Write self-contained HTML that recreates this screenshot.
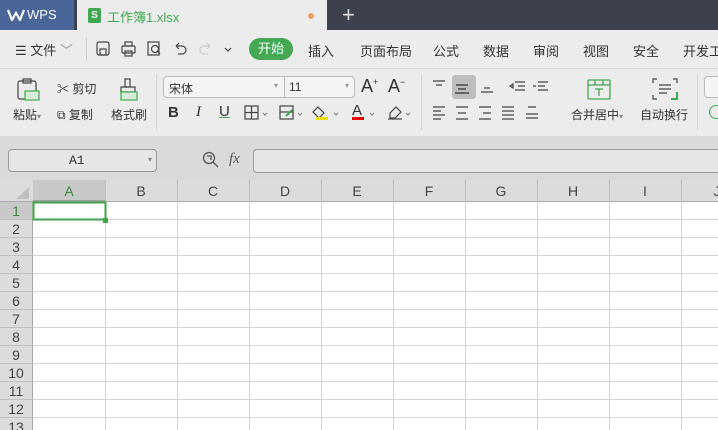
<!DOCTYPE html><html><head><meta charset="utf-8"><style>
*{margin:0;padding:0;box-sizing:border-box}
body{width:718px;height:430px;overflow:hidden;background:#fff;font-family:"Liberation Sans","Noto Sans CJK SC",sans-serif;font-size:12px;color:#333;position:relative}
.a{position:absolute}
.t{position:absolute;white-space:nowrap}
</style></head><body>
<div class="a" style="left:0;top:0;width:718px;height:30px;background:#3d414d"></div>
<div class="a" style="left:0;top:0;width:74px;height:30px;background:#4a6698"></div>
<svg class="a" style="left:7px;top:9px" width="18" height="12"><path d="M1 1 L5 11 L9 4 L13 11 L17 1" stroke="#fff" stroke-width="2.2" fill="none"/></svg>
<div class="t" style="left:27px;top:7px;color:#fff;font-size:13px">WPS</div>
<div class="a" style="left:77px;top:0;width:250px;height:30px;background:#ececec"></div>
<div class="a" style="left:88px;top:8px;width:13px;height:15px;background:#3fa950;border-radius:2px;color:#fff;font-size:10px;text-align:center;line-height:15px;font-weight:bold">S</div>
<div class="t" style="left:107px;top:7px;color:#3fa950;font-size:13px">工作簿1.xlsx</div>
<div class="a" style="left:308px;top:13px;width:6px;height:6px;border-radius:3px;background:#e8a060"></div>
<div class="t" style="left:342px;top:2px;color:#ddd;font-size:22px">+</div>
<div class="a" style="left:0;top:30px;width:718px;height:106px;background:#ececec"></div>
<div class="a" style="left:0;top:68px;width:718px;height:1px;background:#d6d6d6"></div>
<div class="t" style="left:15px;top:40px;font-size:13px">☰ 文件 <span style="color:#999">﹀</span></div>
<div class="a" style="left:86px;top:38px;width:1px;height:22px;background:#ccc"></div>
<svg class="a" style="left:96px;top:41px" width="140" height="16" fill="none" stroke="#444" stroke-width="1.2">
<rect x="1" y="1" width="12" height="13" rx="2"/><rect x="4" y="8" width="6" height="6"/>
<rect x="26" y="5" width="13" height="7" rx="1"/><rect x="29" y="1" width="7" height="4"/><rect x="29" y="10" width="7" height="5"/>
<rect x="52" y="1" width="11" height="13"/><circle cx="59" cy="8" r="3.5"/><path d="M61 10l3 3"/>
<path d="M80 5h6a4 4 0 010 8h-4M80 5l3-3M80 5l3 3"/>
<path d="M114 5h-6a4 4 0 000 8h4M114 5l-3-3M114 5l-3 3" stroke="#ccc"/>
<path d="M129 7l3 3 3-3"/></svg>
<div class="a" style="left:249px;top:38px;width:44px;height:22px;border-radius:11px;background:#44a952;color:#fff;font-size:13px;text-align:center;line-height:22px">开始</div>
<div class="t" style="left:308px;top:41px;font-size:13px">插入</div>
<div class="t" style="left:360px;top:41px;font-size:13px">页面布局</div>
<div class="t" style="left:433px;top:41px;font-size:13px">公式</div>
<div class="t" style="left:483px;top:41px;font-size:13px">数据</div>
<div class="t" style="left:533px;top:41px;font-size:13px">审阅</div>
<div class="t" style="left:583px;top:41px;font-size:13px">视图</div>
<div class="t" style="left:633px;top:41px;font-size:13px">安全</div>
<div class="t" style="left:683px;top:41px;font-size:13px">开发工</div>
<svg class="a" style="left:16px;top:78px" width="26" height="24" fill="none" stroke="#444" stroke-width="1.2"><rect x="2" y="3" width="18" height="18" rx="2"/><rect x="7" y="1" width="8" height="4"/><rect x="9" y="13" width="14" height="9" fill="#d9ead9" stroke="#3fa950"/></svg>
<div class="t" style="left:13px;top:106px">粘贴<span style="color:#888;font-size:8px">▾</span></div>
<div class="t" style="left:57px;top:80px">✂ 剪切</div>
<div class="t" style="left:57px;top:106px">⧉ 复制</div>
<svg class="a" style="left:118px;top:78px" width="22" height="24" fill="none" stroke="#444" stroke-width="1.2"><rect x="7" y="1" width="5" height="8"/><path d="M3 9h14v5H3z"/><rect x="3" y="14" width="16" height="8" fill="#d9ead9" stroke="#3fa950"/></svg>
<div class="t" style="left:111px;top:106px">格式刷</div>
<div class="a" style="left:156px;top:74px;width:1px;height:56px;background:#d6d6d6"></div>
<div class="a" style="left:163px;top:76px;width:192px;height:22px;border:1px solid #bbb;border-radius:4px;background:#f4f4f4"></div>
<div class="a" style="left:284px;top:77px;width:1px;height:20px;background:#bbb"></div>
<div class="t" style="left:169px;top:80px">宋体</div><div class="t" style="left:274px;top:81px;color:#999;font-size:8px">▾</div>
<div class="t" style="left:289px;top:80px">11</div><div class="t" style="left:345px;top:81px;color:#999;font-size:8px">▾</div>
<div class="t" style="left:361px;top:76px;font-size:18px">A<sup style="font-size:9px">+</sup></div>
<div class="t" style="left:388px;top:76px;font-size:18px">A<sup style="font-size:9px">−</sup></div>
<div class="t" style="left:168px;top:104px;font-size:15px;font-weight:bold">B</div>
<div class="t" style="left:196px;top:104px;font-size:15px;font-style:italic;font-family:'Liberation Serif'">I</div>
<div class="t" style="left:219px;top:103px;font-size:15px;text-decoration:underline;text-decoration-color:#3fa950">U</div>
<svg class="a" style="left:244px;top:105px" width="175" height="16" fill="none" stroke="#444" stroke-width="1.2"><rect x="1" y="1" width="13" height="13"/><path d="M7.5 1v13M1 7.5h13"/><path d="M19 8l2 2 2-2" stroke="#888"/>
<rect x="36" y="1" width="13" height="13"/><path d="M36 7h13" /><path d="M42 11l6-6" stroke="#3fa950" stroke-width="2"/><path d="M54 8l2 2 2-2" stroke="#888"/>
<path d="M74 2l6 6-5 5-6-6z"/><rect x="72" y="12" width="12" height="3" fill="#f0e000" stroke="none"/><path d="M90 8l2 2 2-2" stroke="#888"/>
<rect x="108" y="12" width="12" height="3" fill="#e00" stroke="none"/><path d="M126 8l2 2 2-2" stroke="#888"/>
<path d="M146 8l6-6 5 5-6 6h-5z"/><path d="M144 14h14"/><path d="M162 8l2 2 2-2" stroke="#888"/></svg>
<div class="t" style="left:352px;top:102px;font-size:15px">A</div>
<div class="a" style="left:421px;top:74px;width:1px;height:56px;background:#d6d6d6"></div>
<div class="a" style="left:452px;top:75px;width:24px;height:24px;background:#bdbdbd;border-radius:3px"></div>
<svg class="a" style="left:430px;top:78px" width="124" height="44" fill="none" stroke="#444" stroke-width="1.2">
<path d="M3 3h12M6 7h6"/><path d="M26 7h12M28 11h8M25 15h14" stroke="#333"/><path d="M51 14h12M54 10h6"/>
<path d="M85 4h10M88 8h7M85 12h10M80 8l3-2v4z" /><path d="M108 4h10M108 8h7M108 12h10M103 8h3"/>
<path d="M3 29h12M3 33h8M3 37h12M3 41h8"/><path d="M26 29h12M28 35h8M26 41h12"/><path d="M49 29h12M53 35h8M49 41h12"/><path d="M72 29h12M72 33h12M72 37h12M72 41h12"/><path d="M96 36h12M96 40h12M98 29h8" /></svg>
<svg class="a" style="left:587px;top:79px" width="24" height="22" fill="none" stroke="#3fa950" stroke-width="1.3"><rect x="1" y="1" width="22" height="19" rx="1"/><path d="M1 6h22M8 1v5M16 1v5M8 10h8M12 10v7"/></svg>
<div class="t" style="left:571px;top:106px">合并居中<span style="color:#888;font-size:8px">▾</span></div>
<svg class="a" style="left:652px;top:78px" width="26" height="24" fill="none" stroke="#444" stroke-width="1.2"><path d="M1 5V1h4M21 1h4v4M1 17v4h4M7 7h12M7 11h12M7 15h8"/><path d="M25 14v7h-6" stroke="#3fa950" stroke-width="2"/></svg>
<div class="t" style="left:640px;top:106px">自动换行</div>
<div class="a" style="left:697px;top:74px;width:1px;height:56px;background:#d6d6d6"></div>
<div class="a" style="left:704px;top:76px;width:20px;height:22px;border:1px solid #bbb;border-radius:4px;background:#f4f4f4"></div>
<div class="a" style="left:709px;top:105px;width:14px;height:14px;border:1.3px solid #3fa950;border-radius:7px"></div>
<div class="a" style="left:0;top:136px;width:718px;height:44px;background:#dadada"></div>
<div class="a" style="left:8px;top:149px;width:149px;height:23px;border:1px solid #999;border-radius:4px;background:#e6e6e6"></div>
<div class="t" style="left:69px;top:153px;font-family:'Liberation Mono';font-size:13px">A1</div>
<div class="t" style="left:148px;top:155px;color:#888;font-size:8px">▾</div>
<svg class="a" style="left:202px;top:151px" width="18" height="18" fill="none" stroke="#555" stroke-width="1.3"><circle cx="7" cy="7" r="5.5"/><path d="M11 11l5 5M5 5h4v4"/></svg>
<div class="t" style="left:229px;top:151px;font-family:'Liberation Serif';font-style:italic;font-size:15px;color:#555">fx</div>
<div class="a" style="left:253px;top:149px;width:470px;height:24px;border:1px solid #999;border-radius:4px;background:#e6e6e6"></div>
<div class="a" style="left:0;top:180px;width:718px;height:22px;background:#dcdcdc;border-bottom:1px solid #a8a8a8"></div>
<div class="a" style="left:33px;top:180px;width:72px;height:22px;background:#c8c8c8;border-bottom:2px solid #a0a0a0"></div>
<svg class="a" style="left:16px;top:187px" width="14" height="12"><path d="M13 0V12H0z" fill="#c0c0c0"/></svg>
<div class="a" style="left:0;top:202px;width:33px;height:228px;background:#dcdcdc;border-right:1px solid #a8a8a8"></div>
<div class="a" style="left:0;top:202px;width:33px;height:18px;background:#c8c8c8"></div>
<svg class="a" style="left:0;top:180px" width="718" height="250" font-family="Liberation Sans" font-size="14">
<g stroke="#d4d4d4">
<path d="M105.5 22V250M177.5 22V250M249.5 22V250M321.5 22V250M393.5 22V250M465.5 22V250M537.5 22V250M609.5 22V250M681.5 22V250"/>
<path d="M33 39.5H718M33 57.5H718M33 75.5H718M33 93.5H718M33 111.5H718M33 129.5H718M33 147.5H718M33 165.5H718M33 183.5H718M33 201.5H718M33 219.5H718M33 237.5H718"/>
<path d="M0 39.5H33M0 57.5H33M0 75.5H33M0 93.5H33M0 111.5H33M0 129.5H33M0 147.5H33M0 165.5H33M0 183.5H33M0 201.5H33M0 219.5H33M0 237.5H33" stroke="#c0c0c0"/>
</g>
<g stroke="#c0c0c0"><path d="M105.5 0V22M177.5 0V22M249.5 0V22M321.5 0V22M393.5 0V22M465.5 0V22M537.5 0V22M609.5 0V22M681.5 0V22"/></g>
<g text-anchor="middle" fill="#444">
<text x="69" y="16" fill="#3a8a40">A</text><text x="141" y="16">B</text><text x="213" y="16">C</text><text x="285" y="16">D</text><text x="357" y="16">E</text><text x="429" y="16">F</text><text x="501" y="16">G</text><text x="573" y="16">H</text><text x="645" y="16">I</text><text x="717" y="16">J</text>
<text x="16" y="36" fill="#3a8a40">1</text><text x="16" y="54">2</text><text x="16" y="72">3</text><text x="16" y="90">4</text><text x="16" y="108">5</text><text x="16" y="126">6</text><text x="16" y="144">7</text><text x="16" y="162">8</text><text x="16" y="180">9</text><text x="16" y="198">10</text><text x="16" y="216">11</text><text x="16" y="234">12</text><text x="16" y="252">13</text>
</g>
<rect x="33.5" y="22.5" width="72" height="17" fill="none" stroke="#44a04a" stroke-width="2"/>
<rect x="103" y="38" width="5" height="5" fill="#44a04a"/>
</svg>
</body></html>
